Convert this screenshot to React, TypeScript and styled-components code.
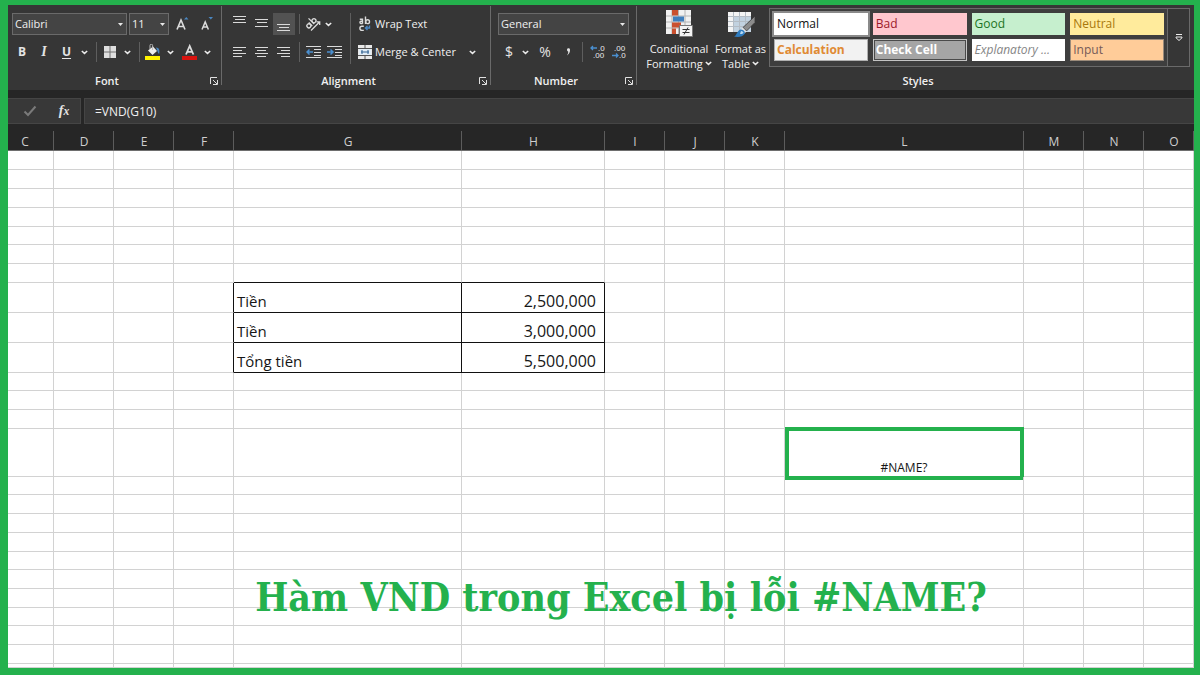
import React from "react";
import styled, { createGlobalStyle, css } from "styled-components";

const GREEN = "#24b14d";
const UI_FONT = '"Open Sans", "Noto Sans", sans-serif';

const GlobalStyle = createGlobalStyle`
  *, *::before, *::after { box-sizing: border-box; }
  body { margin: 0; background: ${GREEN}; font-family: ${UI_FONT}; }
  button, select, input { font: inherit; color: inherit; margin: 0; }
  svg { display: block; flex: none; }
`;

const Frame = styled.div`
  min-height: 100vh;
  display: flex;
  flex-direction: column;
  border: solid ${GREEN};
  border-width: 5px 6px 7px 8px;
  background: #fff;
  overflow: hidden;
`;

/* ---------- Ribbon ---------- */

const Ribbon = styled.header`
  display: flex;
  height: 85px;
  background: #363636;
  color: #f0f0f0;
  font-size: 11px;
`;

const Group = styled.section<{ $width?: number; $pad: number }>`
  flex: ${(p) => (p.$width ? `0 0 ${p.$width}px` : "1 1 0")};
  min-width: 0;
  display: flex;
  flex-direction: column;
  padding-top: 8px;
  padding-left: ${(p) => p.$pad}px;
  ${(p) =>
    p.$width &&
    css`
      background: linear-gradient(#6a6a6a, #6a6a6a) right 1px / 1px 79px no-repeat;
    `}
`;

const GroupBody = styled.div`
  display: flex;
  height: 60px;
`;

const Stack = styled.div`
  display: flex;
  flex-direction: column;
  gap: 6px;
`;

const Tools = styled.div<{ $gap?: number }>`
  display: flex;
  align-items: center;
  height: 22px;
  gap: ${(p) => p.$gap || 0}px;
`;

const GroupFooter = styled.footer<{ $pad: number }>`
  display: flex;
  align-items: center;
  height: 16px;
  margin-left: -${(p) => p.$pad}px;
`;

const GroupTitle = styled.h2`
  flex: 1;
  margin: 0;
  font-size: 11px;
  line-height: 16px;
  font-weight: 600;
  text-align: center;
`;

const ToolButton = styled.button<{ $w: number; $active?: boolean }>`
  flex: none;
  display: flex;
  align-items: center;
  justify-content: center;
  width: ${(p) => p.$w}px;
  height: 22px;
  padding: 0;
  border: 0;
  background: ${(p) => (p.$active ? "#525252" : "transparent")};
`;

const LabelButton = styled.button<{ $w?: number }>`
  display: flex;
  align-items: center;
  gap: 3px;
  width: ${(p) => (p.$w ? `${p.$w}px` : "auto")};
  height: 22px;
  padding: 0 0 0 4px;
  border: 0;
  background: transparent;
  font-size: 11px;
  line-height: 16px;
  font-weight: 500;
  white-space: nowrap;
`;

const Glyph = styled.span<{ $size: number; $bold?: boolean; $italic?: boolean; $underline?: boolean; $serif?: boolean }>`
  font-family: ${(p) => (p.$serif ? '"Liberation Serif", serif' : UI_FONT)};
  font-size: ${(p) => p.$size}px;
  line-height: 16px;
  font-weight: ${(p) => (p.$bold ? 700 : 400)};
  font-style: ${(p) => (p.$italic ? "italic" : "normal")};
  text-decoration: ${(p) => (p.$underline ? "underline" : "none")};
  text-underline-offset: 2px;
  color: #e4e4e4;
`;

const Divider = styled.span<{ $w: number; $tall?: boolean }>`
  flex: none;
  width: ${(p) => p.$w}px;
  height: ${(p) => (p.$tall ? 51 : 20)}px;
  background: linear-gradient(#5e5e5e, #5e5e5e) center / 1px 100% no-repeat;
`;

const ComboBox = styled.span<{ $w: number }>`
  position: relative;
  flex: none;
  width: ${(p) => p.$w}px;
  height: 22px;

  select {
    appearance: none;
    width: 100%;
    height: 22px;
    padding: 0 14px 0 2px;
    border: 1px solid #6a6a6a;
    border-radius: 0;
    background: #444;
    font-size: 11px;
    line-height: 16px;
  }

  svg {
    position: absolute;
    right: 4px;
    top: 10px;
    pointer-events: none;
  }
`;

const BigButton = styled.button<{ $w: number }>`
  flex: none;
  display: flex;
  flex-direction: column;
  align-items: center;
  width: ${(p) => p.$w}px;
  height: 60px;
  padding: 0;
  border: 0;
  background: transparent;
  font-size: 11px;
  line-height: 15px;
  white-space: nowrap;

  svg { margin-top: -4px; margin-bottom: 3px; }
`;

const ButtonLine = styled.span`
  display: flex;
  align-items: center;
  gap: 2px;

  svg { margin: 0; }
`;

const Gallery = styled.div`
  flex: 1;
  display: flex;
  height: 59px;
  margin: -5px 4px 0 4px;
  border: 1px solid #6a6a6a;
  background: #3e3e3e;
`;

const Swatches = styled.div`
  flex: 1;
  display: grid;
  grid-template-columns: repeat(4, 1fr);
  grid-template-rows: 22px 22px;
  gap: 4px 5px;
  padding: 4px 3px 4px 4px;
`;

const Swatch = styled.button<{ $bg: string; $fg: string; $bold?: boolean; $italic?: boolean; $selected?: boolean; $edge?: string; $framed?: boolean }>`
  min-width: 0;
  padding: 0 2px;
  border: 1px solid ${(p) => p.$edge || p.$bg};
  background: ${(p) => p.$bg};
  color: ${(p) => p.$fg};
  font-size: 12px;
  line-height: 18px;
  font-weight: ${(p) => (p.$bold ? 700 : 400)};
  font-style: ${(p) => (p.$italic ? "italic" : "normal")};
  text-align: left;
  white-space: nowrap;
  ${(p) => p.$selected && css`outline: 2px solid #8a8a8a;`}
  ${(p) => p.$framed && css`box-shadow: inset 0 0 0 1px #4a4a4a;`}
`;

const MoreButton = styled.button`
  width: 22px;
  display: flex;
  align-items: center;
  justify-content: center;
  padding: 0;
  border: 0;
  border-left: 1px solid #6a6a6a;
  background: #363636;
`;

/* ---------- Formula bar ---------- */

const FormulaBar = styled.div`
  display: flex;
  gap: 3px;
  height: 35px;
  padding: 8px 0 1px;
  background: #262626;
  color: #f0f0f0;
`;

const FormulaTools = styled.div`
  display: flex;
  width: 73px;
  padding-left: 5px;
  align-items: center;
  border: solid #454545;
  border-width: 1px 1px 1px 0;
  background: #383838;
`;

const FormulaInput = styled.input`
  flex: 1;
  min-width: 0;
  padding: 0 10px;
  border: solid #454545;
  border-width: 1px 0 1px 1px;
  border-radius: 0;
  background: #383838;
  && { font-size: 12px; }
`;

/* ---------- Sheet ---------- */

const SheetArea = styled.main`
  position: relative;
  flex: 1;
  overflow: hidden;
`;

const Grid = styled.table`
  width: 100%;
  table-layout: fixed;
  border-collapse: separate;
  border-spacing: 0;
`;

const ColumnHead = styled.th`
  height: 26px;
  padding: 8px 0 0;
  border-bottom: 1px solid #6e6e6e;
  background: linear-gradient(#5c5c5c, #5c5c5c) right bottom / 1px 19px no-repeat #262626;
  color: #cfcfcf;
  font-size: 12px;
  line-height: 17px;
  font-weight: 400;

  &:first-child { padding-right: 12px; }
  &:last-child { padding-left: 10px; }
`;

const Row = styled.tr<{ $h: number }>`
  height: ${(p) => p.$h}px;
`;

const Cell = styled.td<{ $blackRight?: boolean; $blackBottom?: boolean; $align?: "right" | "center" }>`
  position: relative;
  padding: 0 8px 0 3px;
  border: solid #d2d2d2;
  border-width: 0 1px 1px 0;
  ${(p) => p.$blackRight && css`border-right-color: #111;`}
  ${(p) => p.$blackBottom && css`border-bottom-color: #111;`}
  color: #161616;
  font-size: ${(p) => (p.$align === "right" ? 16 : p.$align === "center" ? 12 : 15)}px;
  line-height: ${(p) => (p.$align === "center" ? 16 : 22)}px;
  text-align: ${(p) => p.$align || "left"};
  vertical-align: bottom;
  white-space: nowrap;
  ${(p) => p.$align === "center" && css`padding: 0;`}
`;

const Highlight = styled.span`
  position: absolute;
  inset: -2px -1px -4px 0;
  border: 4px solid ${GREEN};
`;

const Caption = styled.h1`
  position: absolute;
  left: 0;
  right: 0;
  bottom: 41px;
  margin: 0;
  padding-left: 40px;
  color: ${GREEN};
  font-family: "DejaVu Serif Condensed", "DejaVu Serif", serif;
  font-size: 39px;
  line-height: 60px;
  font-weight: 700;
  text-align: center;
  white-space: nowrap;
`;

/* ---------- Icons ---------- */

const Chevron = () => (
  <svg width="7" height="5" viewBox="0 0 7 5">
    <path d="M.8 1l2.700 2.400L6.200 1" fill="none" stroke="#ececec" strokeWidth="1.500" />
  </svg>
);

const Caret = () => (
  <svg width="5" height="3" viewBox="0 0 5 3">
    <path d="M0 0h5L2.500 3z" fill="#e8e8e8" />
  </svg>
);

const Launcher = () => (
  <svg width="8" height="8" viewBox="0 0 8 8" fill="none" stroke="#e0e0e0">
    <path d="M.5 7V.5H7M3 3l4 4M7.500 3v4.500H3" />
  </svg>
);

const GrowFont = ({ down }: { down?: boolean }) => (
  <svg width="15" height="16" viewBox="0 0 15 16">
    {down ? (
      <path d="M3 13.500l3.200-7.500 3.200 7.500M4.300 11h3.800" fill="none" stroke="#dcdcdc" strokeWidth="1.500" />
    ) : (
      <path d="M2 13.500L6 4l4 9.500M3.500 10.500h5" fill="none" stroke="#dcdcdc" strokeWidth="1.600" />
    )}
    <path d={down ? "M9.500 1h4.500l-2.200 2.500z" : "M9 3.500L11.300 1l2.200 2.500z"} fill="#4a86c0" />
  </svg>
);

const Bars = ({ rows }: { rows: [number, number, number][] }) => (
  <svg width="14" height="20" viewBox="0 0 14 20">
    {rows.map(([x, y, w]) => (
      <rect key={y} x={x} y={y} width={w} height="1" fill="#dadada" />
    ))}
  </svg>
);

const Orientation = () => (
  <svg width="17" height="16" viewBox="0 0 17 16" fill="none" stroke="#dcdcdc" strokeWidth="1.300">
    <g transform="rotate(-45 6 7)">
      <circle cx="2.500" cy="7.500" r="2" />
      <path d="M4.800 5v5M7.500 2v8" />
      <circle cx="9.700" cy="7.500" r="2" />
    </g>
    <path d="M6 14.500L14.500 6M11.500 5.800h3.200V9" />
  </svg>
);

const Indent = ({ right }: { right?: boolean }) => (
  <svg width="16" height="14" viewBox="0 0 16 14">
    <path d="M0 1.500h15M8 4.500h7M8 7.500h7M8 10.500h7M0 12.500h15" stroke="#dadada" fill="none" />
    <path d={right ? "M0 7h6M3.500 4.500L6 7 3.500 9.500" : "M7 7H1M3.500 4.500L1 7l2.500 2.500"} stroke="#4a8fd0" strokeWidth="1.500" fill="none" />
  </svg>
);

const WrapIcon = () => (
  <svg width="14" height="16" viewBox="0 0 14 16" fill="none" stroke="#dcdcdc" strokeWidth="1.400">
    <path d="M1.800 3.200h2.700v4.500M4.500 5.200H2.800a1.200 1.200 0 0 0 0 2.300h1.700M7.500 .5v7.500" />
    <circle cx="9.600" cy="5.700" r="1.900" />
    <path d="M5.800 10.200H4a2.100 2.100 0 0 0 0 4.200h1.800" />
    <path d="M11.500 9.500v2.500H7.500M9.500 10l-2 2 2 2" stroke="#4a86c0" />
  </svg>
);

const MergeIcon = () => (
  <svg width="14" height="14" viewBox="0 0 14 14">
    <path d="M0 0h14v14H0z" fill="#e8e8e8" />
    <path d="M0 3.500h14M0 10.500h14M7 0v3.500M7 10.500V14" stroke="#555" />
    <path d="M1 4h12v6H1z" fill="#e2edf6" />
    <path d="M3 7h8M4 5v4M10 5v4" stroke="#2c5f8f" fill="none" />
  </svg>
);

const BordersIcon = () => (
  <svg width="12" height="12" viewBox="0 0 12 12">
    <path d="M0 0h12v12H0z" fill="#dedede" />
    <path d="M6 0v12M0 6h12" stroke="#707070" />
  </svg>
);

const FillIcon = () => (
  <svg width="16" height="16" viewBox="0 0 16 16">
    <path d="M3 6.500L8 2.500l4 4.500L7.500 11z" fill="#eee" />
    <path d="M5 5V1.500a1.300 1.300 0 0 1 2.600 0V6" fill="none" stroke="#bbb" />
    <path d="M11 3.500c3 .2 4 2.500 3.200 6.500-1.500-.5-1.500-3-2.200-4z" fill="#4a86c0" />
    <path d="M0 12h15v4H0z" fill="#fff200" />
  </svg>
);

const FontColorIcon = () => (
  <svg width="16" height="16" viewBox="0 0 16 16">
    <path d="M4 10.500L7.700 2l3.700 8.500M5.300 7.800h4.800" fill="none" stroke="#dcdcdc" strokeWidth="1.800" />
    <path d="M0 12h15v4H0z" fill="#d8130f" />
  </svg>
);

const DecimalText = styled.text`
  font-family: "Liberation Sans", sans-serif;
  font-size: 8px;
  fill: #ececec;
`;

const DecimalIcon = ({ less }: { less?: boolean }) => (
  <svg width="16" height="16" viewBox="0 0 16 16">
    <DecimalText x={less ? 3 : 8} y="7">{less ? ".00" : ".0"}</DecimalText>
    <DecimalText x={less ? 8 : 3} y="14">{less ? ".0" : ".00"}</DecimalText>
    <path
      d={less ? "M1 11.500h6M5 9.500l2 2-2 2" : "M7 4H1M3 2L1 4l2 2"}
      fill="none"
      stroke="#4a8fd0"
      strokeWidth="1.300"
    />
  </svg>
);

const ConditionalIcon = () => (
  <svg width="28" height="29" viewBox="0 0 28 29">
    <path d="M1 1h25v24H1z" fill="#f1f1f1" />
    <path d="M1 7h25M1 13h25M1 19h25M7 1v24M13.500 1v24M20 1v24" stroke="#b4b4b4" fill="none" />
    <path d="M7 1h6v5.500H7zM7 13.500h9v5H7zM7 19.500h4V25H7z" fill="#c9502f" />
    <path d="M8 7.500h11v5H8z" fill="#3f7fbd" />
    <path d="M14.500 16.500h13v11h-13z" fill="#f4f4f4" stroke="#777" />
    <path d="M17.500 20.500h7M17.500 23.500h7M23 18.500l-4 7" stroke="#333" fill="none" />
  </svg>
);

const FormatTableIcon = () => (
  <svg width="28" height="29" viewBox="0 0 28 29">
    <path d="M1 3h23v20H1z" fill="#f4f4f4" />
    <path d="M7 8h17v15H7z" fill="#c2d2e0" />
    <path d="M1 7.500h23M1 12.500h23M1 17.500h23M6.500 3v20M12.500 3v20M18.500 3v20" stroke="#b4bcc4" fill="none" />
    <path d="M28 7v6.500l-8.500 8.500-3.500-3.500z" fill="#8c8c8c" stroke="#363636" strokeWidth=".8" />
    <path d="M15.500 18.500l4 4-2 2-4-3z" fill="#e4e4e4" />
    <path d="M13.500 20.500c2.500 0 4.500 1.500 4.500 4-2 3.500-7 4-11 3 3-1 3-6 6.500-7z" fill="#2e7cc0" />
    <path d="M14 22c1.500 0 2.500 1 2.500 2-1 1-2 1-3.500 1z" fill="#b8d8f0" />
  </svg>
);

const MoreIcon = () => (
  <svg width="8" height="8" viewBox="0 0 8 8" fill="none" stroke="#ececec">
    <path d="M1 .5h6M1 3h6v.8L4 6.500 1 3.800z" />
  </svg>
);

const CheckIcon = () => (
  <svg width="14" height="12" viewBox="0 0 14 12">
    <path d="M1.500 6.500L5 10l7.500-8.500" fill="none" stroke="#7a7a7a" strokeWidth="2" />
  </svg>
);

/* ---------- Data ---------- */

const columns: [string, number?][] = [
  ["C", 46], ["D", 60], ["E", 60], ["F", 60], ["G", 228], ["H", 143], ["I", 60],
  ["J", 60], ["K", 60], ["L", 239], ["M", 60], ["N", 60], ["O"],
];

const rowHeights = [19, 19, 19, 19, 18, 19, 19, 30, 30, 30, 18, 19, 19, 48, 18, 19, 19, 19, 18, 19, 19, 18, 19, 19, 4];

const FIRST_ENTRY = 7;
const ERROR_ROW = 13;
const entries = [
  ["Tiền", "2,500,000"],
  ["Tiền", "3,000,000"],
  ["Tổng tiền", "5,500,000"],
];

const swatches = [
  { name: "Normal", bg: "#ffffff", fg: "#111111", selected: true },
  { name: "Bad", bg: "#ffc7ce", fg: "#9c1a2a" },
  { name: "Good", bg: "#c6efce", fg: "#1d7324" },
  { name: "Neutral", bg: "#ffeb9c", fg: "#a9780c" },
  { name: "Calculation", bg: "#f2f2f2", fg: "#e08a34", bold: true, edge: "#b0b0b0" },
  { name: "Check Cell", bg: "#a5a5a5", fg: "#ffffff", bold: true, edge: "#c4c4c4", framed: true },
  { name: "Explanatory ...", bg: "#ffffff", fg: "#858585", italic: true },
  { name: "Input", bg: "#ffcc99", fg: "#755a58", edge: "#9a8a7a" },
];

const Combo = ({ label, value, width }: { label: string; value: string; width: number }) => (
  <ComboBox $w={width}>
    <select aria-label={label} defaultValue={value}>
      <option>{value}</option>
    </select>
    <Caret />
  </ComboBox>
);

const Footer = ({ title, pad, launcher = true }: { title: string; pad: number; launcher?: boolean }) => (
  <GroupFooter $pad={pad}>
    <GroupTitle>{title}</GroupTitle>
    {launcher && (
      <ToolButton $w={16} aria-label={`${title} settings`}>
        <Launcher />
      </ToolButton>
    )}
  </GroupFooter>
);

const More = ({ w, label }: { w: number; label: string }) => (
  <ToolButton $w={w} aria-label={label}>
    <Chevron />
  </ToolButton>
);

const SheetRow = ({ index, height }: { index: number; height: number }) => {
  const entry = entries[index - FIRST_ENTRY];
  const aboveOrIn = index >= FIRST_ENTRY - 1 && index < FIRST_ENTRY + entries.length;
  return (
    <Row $h={height}>
      {columns.map(([name]) => {
        const inTable = name === "G" || name === "H";
        const text = entry && name === "G" ? entry[0] : entry && name === "H" ? entry[1] : "";
        const isError = index === ERROR_ROW && name === "L";
        return (
          <Cell
            key={name}
            $blackRight={!!entry && (inTable || name === "F")}
            $blackBottom={aboveOrIn && inTable}
            $align={isError ? "center" : text && name === "H" ? "right" : undefined}
          >
            {isError ? (
              <>
                #NAME?
                <Highlight />
              </>
            ) : (
              text
            )}
          </Cell>
        );
      })}
    </Row>
  );
};

export default function App() {
  return (
    <Frame>
      <GlobalStyle />
      <Ribbon>
        <Group $width={214} $pad={4}>
          <GroupBody>
            <Stack>
              <Tools $gap={2}>
                <Combo label="Font" value="Calibri" width={115} />
                <Combo label="Font size" value="11" width={40} />
                <ToolButton $w={22} aria-label="Increase font size"><GrowFont /></ToolButton>
                <ToolButton $w={22} aria-label="Decrease font size"><GrowFont down /></ToolButton>
              </Tools>
              <Tools>
                <ToolButton $w={20}><Glyph $size={12} $bold>B</Glyph></ToolButton>
                <ToolButton $w={24}><Glyph $size={14} $italic $bold $serif>I</Glyph></ToolButton>
                <ToolButton $w={21}><Glyph $size={12} $bold $underline>U</Glyph></ToolButton>
                <More w={14} label="Underline options" />
                <Divider $w={10} />
                <ToolButton $w={18} aria-label="Borders"><BordersIcon /></ToolButton>
                <More w={16} label="Border options" />
                <Divider $w={8} />
                <ToolButton $w={20} aria-label="Fill color"><FillIcon /></ToolButton>
                <More w={14} label="Fill options" />
                <ToolButton $w={26} aria-label="Font color"><FontColorIcon /></ToolButton>
                <More w={8} label="Font color options" />
              </Tools>
            </Stack>
          </GroupBody>
          <Footer title="Font" pad={4} />
        </Group>

        <Group $width={269} $pad={7}>
          <GroupBody>
            <Stack>
              <Tools>
                <ToolButton $w={22} aria-label="Top align"><Bars rows={[[0, 2, 13], [2, 5, 10], [0, 8, 13]]} /></ToolButton>
                <ToolButton $w={22} aria-label="Middle align"><Bars rows={[[0, 5, 13], [2, 8, 10], [0, 12, 13]]} /></ToolButton>
                <ToolButton $w={22} $active aria-label="Bottom align"><Bars rows={[[0, 10, 13], [2, 13, 10], [0, 16, 13]]} /></ToolButton>
                <Divider $w={8} />
                <ToolButton $w={20} aria-label="Orientation"><Orientation /></ToolButton>
                <More w={10} label="Orientation options" />
              </Tools>
              <Tools>
                <ToolButton $w={22} aria-label="Align left"><Bars rows={[[0, 5, 13], [0, 8, 9], [0, 11, 13], [0, 14, 9]]} /></ToolButton>
                <ToolButton $w={22} aria-label="Center"><Bars rows={[[0, 5, 13], [2, 8, 9], [0, 11, 13], [2, 14, 9]]} /></ToolButton>
                <ToolButton $w={22} aria-label="Align right"><Bars rows={[[0, 5, 13], [4, 8, 9], [0, 11, 13], [4, 14, 9]]} /></ToolButton>
                <Divider $w={8} />
                <ToolButton $w={21} aria-label="Decrease indent"><Indent /></ToolButton>
                <ToolButton $w={22} aria-label="Increase indent"><Indent right /></ToolButton>
              </Tools>
            </Stack>
            <Divider $w={8} $tall />
            <Stack>
              <LabelButton><WrapIcon />Wrap Text</LabelButton>
              <Tools>
                <LabelButton $w={108}><MergeIcon />Merge &amp; Center</LabelButton>
                <More w={20} label="Merge options" />
              </Tools>
            </Stack>
          </GroupBody>
          <Footer title="Alignment" pad={7} />
        </Group>

        <Group $width={146} $pad={7}>
          <GroupBody>
            <Stack>
              <Combo label="Number format" value="General" width={131} />
              <Tools>
                <ToolButton $w={22}><Glyph $size={14}>$</Glyph></ToolButton>
                <More w={10} label="Currency options" />
                <ToolButton $w={30}><Glyph $size={14}>%</Glyph></ToolButton>
                <ToolButton $w={16} aria-label="Comma style">
                  <svg width="5" height="8" viewBox="0 0 5 8">
                    <path d="M1 1.500a1.500 1.500 0 1 1 3 .6C4 4.500 3 6 1 7.500 2 6 2.300 5 2.200 3.600 1.500 3.500 1 2.500 1 1.500z" fill="#e4e4e4" />
                  </svg>
                </ToolButton>
                <Divider $w={12} />
                <ToolButton $w={20} aria-label="Increase decimal"><DecimalIcon /></ToolButton>
                <ToolButton $w={22} aria-label="Decrease decimal"><DecimalIcon less /></ToolButton>
              </Tools>
            </Stack>
          </GroupBody>
          <Footer title="Number" pad={7} />
        </Group>

        <Group $pad={5}>
          <GroupBody>
            <BigButton $w={74}>
              <ConditionalIcon />
              <ButtonLine>Conditional</ButtonLine>
              <ButtonLine>Formatting <Chevron /></ButtonLine>
            </BigButton>
            <BigButton $w={49}>
              <FormatTableIcon />
              <ButtonLine>Format as</ButtonLine>
              <ButtonLine>Table <Chevron /></ButtonLine>
            </BigButton>
            <Gallery>
              <Swatches>
                {swatches.map((s) => (
                  <Swatch
                    key={s.name}
                    $bg={s.bg}
                    $fg={s.fg}
                    $bold={s.bold}
                    $italic={s.italic}
                    $selected={s.selected}
                    $edge={s.edge}
                    $framed={s.framed}
                  >
                    {s.name}
                  </Swatch>
                ))}
              </Swatches>
              <MoreButton aria-label="More styles"><MoreIcon /></MoreButton>
            </Gallery>
          </GroupBody>
          <Footer title="Styles" pad={0} launcher={false} />
        </Group>
      </Ribbon>

      <FormulaBar>
        <FormulaTools>
          <ToolButton $w={34} aria-label="Enter"><CheckIcon /></ToolButton>
          <ToolButton $w={34}><Glyph $size={14} $italic $bold $serif>f<small>x</small></Glyph></ToolButton>
        </FormulaTools>
        <FormulaInput aria-label="Formula" defaultValue="=VND(G10)" />
      </FormulaBar>

      <SheetArea>
        <Grid>
          <colgroup>
            {columns.map(([name, width]) => (
              <col key={name} width={width} />
            ))}
          </colgroup>
          <thead>
            <tr>
              {columns.map(([name]) => (
                <ColumnHead key={name} scope="col">{name}</ColumnHead>
              ))}
            </tr>
          </thead>
          <tbody>
            {rowHeights.map((height, i) => (
              <SheetRow key={i} index={i} height={height} />
            ))}
          </tbody>
        </Grid>
        <Caption>Hàm VND trong Excel bị lỗi #NAME?</Caption>
      </SheetArea>
    </Frame>
  );
}
